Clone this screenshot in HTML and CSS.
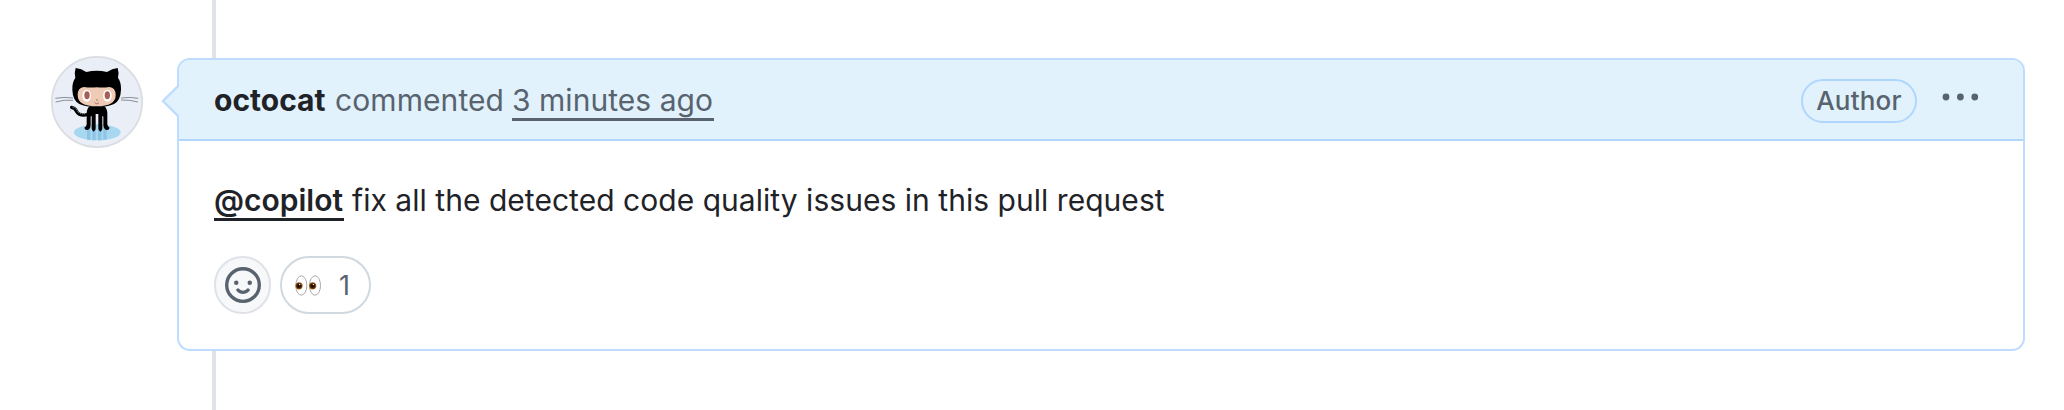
FILE: index.html
```html
<!DOCTYPE html>
<html lang="en">
<head>
<meta charset="utf-8">
<title>Pull request comment</title>
<link rel="stylesheet" href="styles.css">
</head>
<body>
<main class="timeline">
  <svg class="avatar" viewBox="33 33 276 276" role="img" aria-label="octocat">
    <circle cx="171" cy="171" r="135.5" fill="#e9eef7" stroke="#dadde1" stroke-width="5"/>
    <ellipse cx="172" cy="262" rx="70" ry="24" fill="#a7d8f0"/>
    <path d="M141 248h10v38l-10-2zM157 248h10v38h-10zM174 248h10v38h-10zM190 248h10v35l-10 2z" fill="#8fc4e6"/>
    <path d="M92 188q-5 7 0 13q4-4 0-13z" fill="#a7d8f0"/>
    <path d="M95 187q11 2 15 13q8 14 34 9" fill="none" stroke="#000" stroke-width="10" stroke-linecap="round"/>
    <path d="M98 186q12 4 15 14q8 9 24 6" fill="none" stroke="#b9c3cc" stroke-width="2.5" stroke-dasharray="3 3"/>
    <path d="M148 184h46q9 10 8 25v29q1 7 7 10q-2 9-12 6q-7-3-7-13v-24q0-4-3-4v37q0 8-6 10q-6-2-6-10v-43h-8v43q0 8-6 10q-6-2-6-10v-37q-3 0-3 4v24q0 10-7 13q-10 3-12-6q7-3 7-10v-29q-1-15 8-25z" fill="#000"/>
    <path d="M107 69q-5 16-1 29q-10 14-9 36q1 32 21 43q18 9 52 9t52-9q20-11 21-43q1-22-9-36q4-13-1-29q-17 2-32 12q-31-8-62 0q-15-10-32-12z" fill="#000"/>
    <path d="M132 126q18 3 38 1q20 2 38-1q19 2 19 24q0 34-57 34t-57-34q0-22 19-24z" fill="#efcbb5"/>
    <ellipse cx="140" cy="152" rx="13" ry="18" fill="#fff"/>
    <ellipse cx="202" cy="152" rx="13" ry="18" fill="#fff"/>
    <ellipse cx="141" cy="151" rx="8" ry="12" fill="#a65f55"/>
    <ellipse cx="202" cy="151" rx="8" ry="12" fill="#a65f55"/>
    <circle cx="171" cy="165" r="2.5" fill="#a65f55"/>
    <path d="M164 173q7 8 13 0" fill="none" stroke="#a65f55" stroke-width="2.5"/>
    <path d="M46 160q26-5 53-1M47 171q25-8 52-5M243 159q27-4 52 1M243 165q26-1 51 6" fill="none" stroke="#6f747c" stroke-width="2.4"/>
  </svg>
  <article class="card">
    <svg class="pointer" viewBox="0 0 18 34" aria-hidden="true">
      <path d="M18 1L2 17l16 16" fill="#e1f2fd" stroke="#bddcff" stroke-width="2.4"/>
    </svg>
    <header class="header">
      <p class="byline"><strong class="name">octocat</strong><span class="verb">commented</span><a class="time">3 minutes ago</a></p>
      <span class="badge">Author</span>
      <svg class="menu" viewBox="0 0 36 8" aria-label="Options"><circle cx="4" cy="4" r="3.4"/><circle cx="18.4" cy="4" r="3.4"/><circle cx="32.8" cy="4" r="3.4"/></svg>
    </header>
    <div class="content">
      <p class="message"><a class="mention">@copilot</a><span class="request">fix all the detected code quality issues in this pull request</span></p>
      <div class="reactions">
        <button class="add" aria-label="Add reaction">
          <svg class="smiley" viewBox="0 0 16 16"><path d="M8 0a8 8 0 1 1 0 16A8 8 0 0 1 8 0ZM1.5 8a6.5 6.5 0 1 0 13 0 6.5 6.5 0 0 0-13 0Zm3.82 1.636a.75.75 0 0 1 1.038.175l.007.009c.103.118.22.222.35.31.264.178.683.37 1.285.37.602 0 1.02-.192 1.285-.371.13-.088.247-.192.35-.31l.007-.008a.75.75 0 0 1 1.222.87l-.022-.015c.02.013.021.015.021.015v.001l-.001.002-.002.003-.005.007-.014.019a2.066 2.066 0 0 1-.184.213c-.16.166-.338.316-.53.445-.63.418-1.37.638-2.127.629-.946 0-1.652-.308-2.126-.63a3.331 3.331 0 0 1-.715-.657l-.014-.02-.005-.006-.002-.003v-.002h-.001l.613-.432-.614.43a.75.75 0 0 1 .183-1.044ZM12 7a1 1 0 1 1-2 0 1 1 0 0 1 2 0ZM5 8a1 1 0 1 1 0-2 1 1 0 0 1 0 2Z"/></svg>
        </button>
        <button class="reaction">
          <svg class="eyes" viewBox="0 0 78 62" aria-label="eyes">
            <defs><radialGradient id="iris"><stop offset=".2" stop-color="#160600"/><stop offset=".65" stop-color="#502503"/><stop offset="1" stop-color="#b77b2b"/></radialGradient></defs>
            <ellipse cx="19" cy="31" rx="16.5" ry="29" fill="#fff" stroke="#a9a9a9" stroke-width="3"/>
            <ellipse cx="60" cy="31" rx="16.5" ry="29" fill="#fff" stroke="#a9a9a9" stroke-width="3"/>
            <circle cx="12" cy="32" r="11" fill="url(#iris)"/><circle cx="53" cy="32" r="11" fill="url(#iris)"/>
            <circle cx="14" cy="28" r="2" fill="#fff"/><circle cx="55" cy="28" r="2" fill="#fff"/>
          </svg>
          <span class="count">1</span>
        </button>
      </div>
    </div>
  </article>
</main>
</body>
</html>
```
FILE: styles.css
```css
* { box-sizing: border-box; }
body { margin: 0; background: #fff; color: #1f2328; font-family: Inter, "Liberation Sans", sans-serif; }
p { margin: 0; }
.timeline {
  display: flex;
  align-items: flex-start;
  height: 410px;
  padding: 56px 39px 0 51px;
  background: linear-gradient(#dfe3e8, #dfe3e8) 212px 0 / 4px 100% no-repeat;
}
.avatar { width: 92px; height: 92px; flex: none; }
.card {
  position: relative;
  flex: 1;
  height: 293px;
  margin: 2px 0 0 34px;
  border: 2px solid #bddcff;
  border-radius: 13px;
  background: #fff;
}
.pointer { position: absolute; left: -18px; top: 24px; width: 18px; height: 34px; }
.header {
  display: flex;
  align-items: center;
  height: 81px;
  padding: 2px 45px 0 35px;
  border-bottom: 2px solid #b0d6ff;
  border-radius: 11px 11px 0 0;
  background: #e1f2fd;
}
.byline { display: flex; flex: 1; font-size: 30px; line-height: 40px; white-space: nowrap; color: #59636e; }
.name { width: 121px; font-weight: 700; color: #1f2328; }
.verb { width: 177px; letter-spacing: 0.08px; }
.time, .mention { border-bottom: 3px solid currentColor; height: 41px; }
.time { width: 202px; letter-spacing: 0.04px; }
.badge {
  width: 116px;
  height: 44px;
  border: 2px solid #b0d6ff;
  border-radius: 22px;
  font-size: 26px;
  font-weight: 500;
  letter-spacing: 0.2px;
  line-height: 40px;
  text-align: center;
  color: #59636e;
}
.menu { width: 36px; height: 8px; margin: 0 0 7px 25px; fill: #59636e; }
.content { padding: 39px 35px; }
.message { display: flex; font-size: 30px; line-height: 40px; white-space: nowrap; }
.mention { width: 130px; font-weight: 600; }
.request { margin-left: 8px; letter-spacing: 0.035px; }
.reactions { display: flex; gap: 9px; margin-top: 35px; }
.add, .reaction { display: flex; align-items: center; height: 58px; padding: 0; font: inherit; border: 2px solid #d1d9e0; border-radius: 29px; }
.add { justify-content: center; width: 57px; border-color: #dfe2e8; background: #f6f8fa; }
.smiley { width: 36px; height: 36px; fill: #59636e; }
.reaction { width: 91px; padding-left: 13px; background: #fff; }
.eyes { width: 26px; height: 21px; }
.count { margin-left: 18px; font-size: 27px; color: #59636e; }
```
